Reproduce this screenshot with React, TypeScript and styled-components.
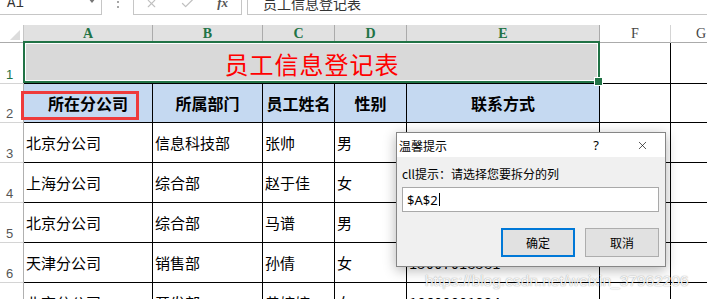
import styled, { createGlobalStyle } from 'styled-components';
import { X, Check } from 'lucide-react';

const GlobalStyle = createGlobalStyle`
  html, body {
    margin: 0;
    padding: 0;
    background: #fff;
    overflow: hidden;
  }
  body {
    font-family: "Noto Sans CJK SC", "Noto Sans", sans-serif;
  }
  * {
    box-sizing: border-box;
  }
`;

const Page = styled.div`
  position: relative;
  width: 707px;
  height: 299px;
  overflow: hidden;
  display: flex;
  flex-direction: column;
`;

/* formula bar, its top is cut off by the screenshot */
const FormulaClip = styled.div`
  height: 15px;
  flex-shrink: 0;
  overflow: hidden;
  display: flex;
  align-items: flex-end;
`;

const FormulaBar = styled.div`
  display: flex;
  width: 100%;
  height: 23px;
  flex-shrink: 0;
`;

const NameBox = styled.div`
  width: 102px;
  display: flex;
  align-items: center;
  justify-content: space-between;
  padding: 0 5px 0 7px;
  border-right: 1px solid #c6c6c6;
  border-bottom: 1px solid #c6c6c6;
  font-family: "Liberation Mono", monospace;
  font-size: 14px;
  color: #333;

  svg {
    align-self: flex-start;
    margin-top: 6px;
  }
`;

const Dots = styled.div`
  width: 31px;
  display: flex;
  flex-direction: column;
  align-items: center;
  justify-content: center;
  gap: 3px;
  padding-top: 2px;

  span {
    width: 2px;
    height: 2px;
    background: #a6a6a6;
  }
`;

const FxBox = styled.div`
  width: 109px;
  display: flex;
  align-items: center;
  justify-content: space-between;
  padding: 0 13px 0 11px;
  border-left: 1px solid #c6c6c6;
  border-right: 1px solid #c6c6c6;
  border-bottom: 1px solid #c6c6c6;
  color: #c0c0c0;
`;

const Fx = styled.span`
  font-family: "Liberation Serif", serif;
  font-style: italic;
  font-weight: bold;
  font-size: 13px;
  color: #555;
`;

const FormulaInput = styled.div`
  flex: 1;
  margin-left: 5px;
  display: flex;
  align-items: center;
  padding-left: 15px;
  border-left: 1px solid #c6c6c6;
  border-bottom: 1px solid #c6c6c6;
  font-size: 14px;
  color: #333;
  white-space: nowrap;
`;

const Spacer = styled.div`
  height: 10px;
  flex-shrink: 0;
`;

/* sheet grid */
const Sheet = styled.div`
  display: grid;
  grid-template-columns: 24px 129px 110px 72px 72px 193px 71px 61px;
  grid-template-rows: 18px 41px 39px repeat(5, 40px);
  flex-shrink: 0;
`;

const Corner = styled.div`
  display: flex;
  align-items: flex-end;
  justify-content: flex-end;
  padding: 0 3px 2px 0;
  border-right: 1px solid #c6c6c6;
  border-bottom: 1px solid #ababab;
`;

const ColHead = styled.div<{ $active?: boolean }>`
  display: flex;
  align-items: center;
  justify-content: center;
  background: ${p => (p.$active ? '#e1e1e1' : '#fff')};
  border-right: 1px solid ${p => (p.$active ? '#ababab' : '#d4d4d4')};
  border-bottom: 1px solid #ababab;
  font-family: "Liberation Serif", serif;
  font-size: 14px;
  font-weight: ${p => (p.$active ? 'bold' : 'normal')};
  color: ${p => (p.$active ? '#217346' : '#444')};
`;

const RowHead = styled.div<{ $active?: boolean }>`
  display: flex;
  align-items: flex-end;
  justify-content: center;
  padding: 0 4px 1px 0;
  border-right: 1px solid #b0b0b0;
  border-bottom: 1px solid #d4d4d4;
  font-family: "Liberation Sans", sans-serif;
  font-size: 13px;
  color: ${p => (p.$active ? '#217346' : '#555')};
`;

const Cell = styled.div`
  display: flex;
  align-items: center;
  padding-left: 2px;
  border-right: 1px solid #000;
  border-bottom: 1px solid #000;
  background: #fff;
  font-size: 15px;
  color: #000;
  white-space: nowrap;
  overflow: hidden;
`;

const HeadCell = styled(Cell)`
  position: relative;
  justify-content: center;
  padding-left: 0;
  overflow: visible;
  background: #c5d9f1;
  font-size: 16px;
  font-weight: bold;
`;

const Mark = styled.span`
  position: absolute;
  left: -3px;
  top: 7px;
  width: 118px;
  height: 29px;
  border: 3px solid #ee3b3b;
  z-index: 3;
`;

const TitleCell = styled.div`
  grid-column: span 5;
  position: relative;
  display: flex;
  align-items: center;
  justify-content: center;
  background: #d9d9d9;
  border-bottom: 1px solid #000;
  font-size: 24px;
  color: #ff0000;
  letter-spacing: 1px;

  &::after {
    content: '';
    position: absolute;
    top: -2px;
    left: -1px;
    right: 0;
    bottom: 0;
    border: 2px solid #217346;
    box-shadow: inset 0 0 0 1px #fff;
    z-index: 2;
  }

  &::before {
    content: '';
    position: absolute;
    right: -3px;
    bottom: -3px;
    width: 7px;
    height: 7px;
    background: #217346;
    border: 1px solid #fff;
    z-index: 3;
  }
`;

/* dialog */
const Dialog = styled.div`
  position: absolute;
  left: 396px;
  top: 132px;
  width: 270px;
  height: 135px;
  display: flex;
  flex-direction: column;
  background: #f0f0f0;
  border: 1px solid #868686;
  box-shadow: 0 3px 12px rgba(0, 0, 0, 0.3);
  z-index: 5;
`;

const TitleBar = styled.div`
  height: 24px;
  display: flex;
  align-items: center;
  justify-content: space-between;
  padding: 0 16px 0 2px;
  background: #fff;
  font-size: 12px;
  color: #000;
`;

const TitleButtons = styled.div`
  display: flex;
  align-items: center;
  gap: 37px;
  font-family: "Noto Sans", sans-serif;
  font-size: 13px;
`;

const Body = styled.div`
  flex: 1;
  display: flex;
  flex-direction: column;
  padding: 9px 6px 0 5px;
`;

const Label = styled.div`
  height: 16px;
  line-height: 16px;
  font-size: 12px;
  color: #000;
  white-space: nowrap;
`;

const Input = styled.div`
  margin-top: 5px;
  height: 25px;
  display: flex;
  align-items: center;
  padding-left: 4px;
  background: #fff;
  border: 1px solid #a9a9a9;
  font-family: "Noto Sans", sans-serif;
  font-size: 13px;
  color: #000;
`;

const Caret = styled.span`
  width: 1px;
  height: 13px;
  margin-left: 1px;
  background: #000;
`;

const ButtonRow = styled.div`
  margin-top: 16px;
  display: flex;
  justify-content: flex-end;
  gap: 10px;
`;

const Button = styled.div<{ $primary?: boolean }>`
  width: 74px;
  height: 29px;
  display: flex;
  align-items: center;
  justify-content: center;
  background: #e1e1e1;
  border: ${p => (p.$primary ? '2px solid #0078d7' : '1px solid #adadad')};
  font-size: 12px;
  color: #000;
`;

const Watermark = styled.div`
  position: absolute;
  left: 425px;
  top: 272px;
  font-family: "Liberation Sans", sans-serif;
  font-size: 15.5px;
  color: rgba(255, 255, 255, 0.92);
  text-shadow: 0 0 1px rgba(0, 0, 0, 0.35), 0 0 2px rgba(0, 0, 0, 0.15);
  white-space: nowrap;
  z-index: 6;
`;

// phone numbers of rows 3-5 sit under the dialog, so only E6/E7 are filled
const rows = [
  ['北京分公司', '信息科技部', '张帅', '男', ''],
  ['上海分公司', '综合部', '赵于佳', '女', ''],
  ['北京分公司', '综合部', '马谱', '男', ''],
  ['天津分公司', '销售部', '孙倩', '女', '15007018581'],
  ['北京分公司', '开发部', '黄婷婷', '女', '18600001234'],
];

const cols = ['A', 'B', 'C', 'D', 'E'];

export default function App() {
  return (
    <Page>
      <GlobalStyle />
      <FormulaClip>
        <FormulaBar>
          <NameBox>
            <span>A1</span>
            <svg width="8" height="5" viewBox="0 0 8 5">
              <polygon points="0,0 8,0 4,5" fill="#777" />
            </svg>
          </NameBox>
          <Dots>
            <span />
            <span />
          </Dots>
          <FxBox>
            <X size={13} strokeWidth={2} />
            <Check size={15} strokeWidth={2} />
            <Fx>fx</Fx>
          </FxBox>
          <FormulaInput>员工信息登记表</FormulaInput>
        </FormulaBar>
      </FormulaClip>
      <Spacer />
      <Sheet>
        <Corner>
          <svg width="10" height="10" viewBox="0 0 10 10">
            <polygon points="10,0 10,10 0,10" fill="#dcdcdc" />
          </svg>
        </Corner>
        {cols.map(c => (
          <ColHead key={c} $active>
            {c}
          </ColHead>
        ))}
        <ColHead>F</ColHead>
        <ColHead>G</ColHead>

        <RowHead $active>1</RowHead>
        <TitleCell>员工信息登记表</TitleCell>
        <Cell />
        <Cell />

        <RowHead>2</RowHead>
        <HeadCell>
          所在分公司
          <Mark />
        </HeadCell>
        <HeadCell>所属部门</HeadCell>
        <HeadCell>员工姓名</HeadCell>
        <HeadCell>性别</HeadCell>
        <HeadCell>联系方式</HeadCell>
        <Cell />
        <Cell />

        {rows.map((r, i) => [
          <RowHead key={`h${i}`}>{i + 3}</RowHead>,
          ...r.map((v, j) => <Cell key={`c${i}-${j}`}>{v}</Cell>),
          <Cell key={`f${i}`} />,
          <Cell key={`g${i}`} />,
        ])}
      </Sheet>

      <Dialog>
        <TitleBar>
          <span>温馨提示</span>
          <TitleButtons>
            <span>?</span>
            <X size={13} strokeWidth={1.2} />
          </TitleButtons>
        </TitleBar>
        <Body>
          <Label>cll提示：请选择您要拆分的列</Label>
          <Input>
            $A$2
            <Caret />
          </Input>
          <ButtonRow>
            <Button $primary>确定</Button>
            <Button>取消</Button>
          </ButtonRow>
        </Body>
      </Dialog>

      <Watermark>https://blog.csdn.net/weixin_37962206</Watermark>
    </Page>
  );
}
